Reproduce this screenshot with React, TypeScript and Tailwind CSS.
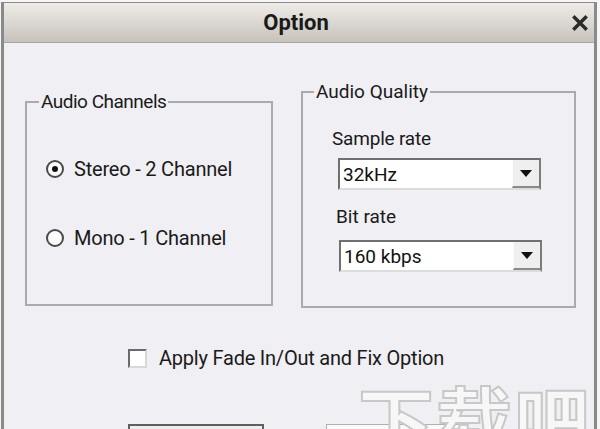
import React from "react";

const FONT = "font-['Roboto','Liberation_Sans',Arial,sans-serif]";

function Combo({ value, className }: { value: string; className?: string }) {
  return (
    <div
      className={`flex h-[32px] w-[203px] shrink-0 border-2 border-t-[#707070] border-l-[#707070] border-r-[#7c7c7c] border-b-[#dcdcdc] bg-white ${className ?? ""}`}
    >
      <div className="flex flex-1 items-center pl-[3px] text-[19px] leading-none text-[#111]">{value}</div>
      <div className="flex w-[27px] items-center justify-center border-l border-l-[#fbfbfb] border-b-2 border-b-[#8a8a8a] bg-[#efefef]">
        <svg width="12" height="7" viewBox="0 0 12 7">
          <path d="M0 0 L12 0 L6 7 Z" fill="#111" />
        </svg>
      </div>
    </div>
  );
}

function Radio({ checked, label }: { checked?: boolean; label: string }) {
  return (
    <div className="flex h-[24px] items-center gap-[10px] pl-[19px]">
      <div className="flex h-[18px] w-[18px] items-center justify-center rounded-full border-2 border-[#4a4a4a] bg-[#fbfbfb]">
        {checked && <div className="h-[6px] w-[6px] rounded-full bg-[#111]" />}
      </div>
      <span className="text-[20px] leading-none tracking-[-0.2px] text-[#1a1a1a]">{label}</span>
    </div>
  );
}

export default function App() {
  return (
    <div className={`relative h-[429px] w-[600px] overflow-hidden bg-[#f6f6f6] ${FONT}`}>
      <div className="ml-[1px] mt-[2px] flex w-[596px] flex-col border-x-[3px] border-t border-[#8a8a8a] bg-[#f0eff3] pb-[40px]">
        {/* Title bar */}
        <div className="flex h-[40px] shrink-0 items-center border-b border-b-[#a9a6a2] bg-gradient-to-b from-[#efece9] to-[#c7c2bb]">
          <div className="flex-1" />
          <span className="text-[22px] font-bold leading-none text-[#1a1a1a]">Option</span>
          <div className="flex flex-1 justify-end pr-[6px]">
            <svg width="16" height="16" viewBox="0 0 16 16">
              <path d="M2.5 2.5 L13.5 13.5 M13.5 2.5 L2.5 13.5" stroke="#2a2a2a" strokeWidth="3.4" strokeLinecap="square" />
            </svg>
          </div>
        </div>

        {/* Groups */}
        <div className="flex shrink-0 items-start pl-[21px]">
          <fieldset className="mt-[49px] h-[214px] w-[248px] shrink-0 border-2 border-[#ababab]">
            <legend className="ml-[12px] px-[2px] text-[19px] leading-[20px] tracking-[-0.5px] text-[#1a1a1a]">Audio Channels</legend>
            <div className="flex flex-col gap-[45px] pt-[45px]">
              <Radio checked label="Stereo - 2 Channel" />
              <Radio label="Mono - 1 Channel" />
            </div>
          </fieldset>

          <fieldset className="ml-[28px] mt-[39px] h-[226px] w-[275px] shrink-0 border-2 border-[#ababab]">
            <legend className="ml-[11px] px-[2px] text-[19px] leading-[20px] text-[#1a1a1a]">Audio Quality</legend>
            <div className="flex flex-col items-start pl-[29px] pt-[26px]">
              <span className="text-[19px] leading-[22px] tracking-[-0.2px] text-[#1a1a1a]">Sample rate</span>
              <Combo value="32kHz" className="ml-[6px] mt-[8px]" />
              <span className="ml-[4px] mt-[16px] text-[19px] leading-[22px] text-[#1a1a1a]">Bit rate</span>
              <Combo value="160 kbps" className="ml-[7px] mt-[12px]" />
            </div>
          </fieldset>
        </div>

        {/* Checkbox */}
        <div className="mt-[38px] flex h-[24px] shrink-0 items-center gap-[12px] pl-[124px]">
          <div className="h-[19px] w-[19px] border-2 border-t-[#6a6a6a] border-l-[#6a6a6a] border-r-[#d8d8d8] border-b-[#d8d8d8] bg-white" />
          <span className="text-[20px] leading-none tracking-[-0.22px] text-[#1a1a1a]">Apply Fade In/Out and Fix Option</span>
        </div>

        {/* Buttons */}
        <div className="mt-[54px] flex shrink-0 gap-[62px] pl-[124px]">
          <div className="h-[30px] w-[136px] border-2 border-[#5f5f5f] bg-[#ededed]" />
          <div className="h-[30px] w-[134px] border border-[#b0b0b0] bg-[#fafafa]" />
        </div>
      </div>

      {/* Watermark */}
      <div className="pointer-events-none absolute left-[358px] top-[380px] font-['Noto_Sans_CJK_SC',sans-serif] text-[76px] font-bold leading-none tracking-[2px] text-[#f7f7f7] [-webkit-text-stroke:2px_#c8c8c8]">
        下载吧
      </div>
    </div>
  );
}
